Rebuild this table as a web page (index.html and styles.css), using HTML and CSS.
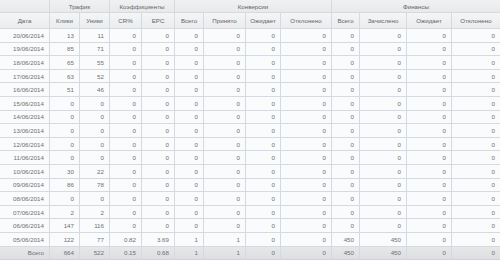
FILE: index.html
```html
<!DOCTYPE html>
<html lang="ru">
<head>
<meta charset="utf-8">
<title>Статистика</title>
<link rel="stylesheet" href="styles.css">
</head>
<body>
<div class="stats">
  <div class="row head1">
    <div class="c"></div>
    <div class="c span2">Трафик</div>
    <div class="c span2">Коэффициенты</div>
    <div class="c span4">Конверсии</div>
    <div class="c span4">Финансы</div>
  </div>
  <div class="row head2">
    <div class="c">Дата</div>
    <div class="c">Клики</div>
    <div class="c">Уники</div>
    <div class="c">CR%</div>
    <div class="c">EPC</div>
    <div class="c">Всего</div>
    <div class="c">Принято</div>
    <div class="c">Ожидает</div>
    <div class="c">Отклонено</div>
    <div class="c">Всего</div>
    <div class="c">Зачислено</div>
    <div class="c">Ожидает</div>
    <div class="c">Отклонено</div>
  </div>
  <div class="row data"><div class="c">20/06/2014</div><div class="c">13</div><div class="c">11</div><div class="c">0</div><div class="c">0</div><div class="c">0</div><div class="c">0</div><div class="c">0</div><div class="c">0</div><div class="c">0</div><div class="c">0</div><div class="c">0</div><div class="c">0</div></div>
  <div class="row data"><div class="c">19/06/2014</div><div class="c">85</div><div class="c">71</div><div class="c">0</div><div class="c">0</div><div class="c">0</div><div class="c">0</div><div class="c">0</div><div class="c">0</div><div class="c">0</div><div class="c">0</div><div class="c">0</div><div class="c">0</div></div>
  <div class="row data"><div class="c">18/06/2014</div><div class="c">65</div><div class="c">55</div><div class="c">0</div><div class="c">0</div><div class="c">0</div><div class="c">0</div><div class="c">0</div><div class="c">0</div><div class="c">0</div><div class="c">0</div><div class="c">0</div><div class="c">0</div></div>
  <div class="row data"><div class="c">17/06/2014</div><div class="c">63</div><div class="c">52</div><div class="c">0</div><div class="c">0</div><div class="c">0</div><div class="c">0</div><div class="c">0</div><div class="c">0</div><div class="c">0</div><div class="c">0</div><div class="c">0</div><div class="c">0</div></div>
  <div class="row data"><div class="c">16/06/2014</div><div class="c">51</div><div class="c">46</div><div class="c">0</div><div class="c">0</div><div class="c">0</div><div class="c">0</div><div class="c">0</div><div class="c">0</div><div class="c">0</div><div class="c">0</div><div class="c">0</div><div class="c">0</div></div>
  <div class="row data"><div class="c">15/06/2014</div><div class="c">0</div><div class="c">0</div><div class="c">0</div><div class="c">0</div><div class="c">0</div><div class="c">0</div><div class="c">0</div><div class="c">0</div><div class="c">0</div><div class="c">0</div><div class="c">0</div><div class="c">0</div></div>
  <div class="row data"><div class="c">14/06/2014</div><div class="c">0</div><div class="c">0</div><div class="c">0</div><div class="c">0</div><div class="c">0</div><div class="c">0</div><div class="c">0</div><div class="c">0</div><div class="c">0</div><div class="c">0</div><div class="c">0</div><div class="c">0</div></div>
  <div class="row data"><div class="c">13/06/2014</div><div class="c">0</div><div class="c">0</div><div class="c">0</div><div class="c">0</div><div class="c">0</div><div class="c">0</div><div class="c">0</div><div class="c">0</div><div class="c">0</div><div class="c">0</div><div class="c">0</div><div class="c">0</div></div>
  <div class="row data"><div class="c">12/06/2014</div><div class="c">0</div><div class="c">0</div><div class="c">0</div><div class="c">0</div><div class="c">0</div><div class="c">0</div><div class="c">0</div><div class="c">0</div><div class="c">0</div><div class="c">0</div><div class="c">0</div><div class="c">0</div></div>
  <div class="row data"><div class="c">11/06/2014</div><div class="c">0</div><div class="c">0</div><div class="c">0</div><div class="c">0</div><div class="c">0</div><div class="c">0</div><div class="c">0</div><div class="c">0</div><div class="c">0</div><div class="c">0</div><div class="c">0</div><div class="c">0</div></div>
  <div class="row data"><div class="c">10/06/2014</div><div class="c">30</div><div class="c">22</div><div class="c">0</div><div class="c">0</div><div class="c">0</div><div class="c">0</div><div class="c">0</div><div class="c">0</div><div class="c">0</div><div class="c">0</div><div class="c">0</div><div class="c">0</div></div>
  <div class="row data"><div class="c">09/06/2014</div><div class="c">86</div><div class="c">78</div><div class="c">0</div><div class="c">0</div><div class="c">0</div><div class="c">0</div><div class="c">0</div><div class="c">0</div><div class="c">0</div><div class="c">0</div><div class="c">0</div><div class="c">0</div></div>
  <div class="row data"><div class="c">08/06/2014</div><div class="c">0</div><div class="c">0</div><div class="c">0</div><div class="c">0</div><div class="c">0</div><div class="c">0</div><div class="c">0</div><div class="c">0</div><div class="c">0</div><div class="c">0</div><div class="c">0</div><div class="c">0</div></div>
  <div class="row data"><div class="c">07/06/2014</div><div class="c">2</div><div class="c">2</div><div class="c">0</div><div class="c">0</div><div class="c">0</div><div class="c">0</div><div class="c">0</div><div class="c">0</div><div class="c">0</div><div class="c">0</div><div class="c">0</div><div class="c">0</div></div>
  <div class="row data"><div class="c">06/06/2014</div><div class="c">147</div><div class="c">116</div><div class="c">0</div><div class="c">0</div><div class="c">0</div><div class="c">0</div><div class="c">0</div><div class="c">0</div><div class="c">0</div><div class="c">0</div><div class="c">0</div><div class="c">0</div></div>
  <div class="row data"><div class="c">05/06/2014</div><div class="c">122</div><div class="c">77</div><div class="c">0.82</div><div class="c">3.69</div><div class="c">1</div><div class="c">1</div><div class="c">0</div><div class="c">0</div><div class="c">450</div><div class="c">450</div><div class="c">0</div><div class="c">0</div></div>
  <div class="row total"><div class="c">Всего</div><div class="c">664</div><div class="c">522</div><div class="c">0.15</div><div class="c">0.68</div><div class="c">1</div><div class="c">1</div><div class="c">0</div><div class="c">0</div><div class="c">450</div><div class="c">450</div><div class="c">0</div><div class="c">0</div></div>
</div>
</body>
</html>
```

FILE: styles.css
```css
html, body {
  margin: 0;
  padding: 0;
  background: #ffffff;
}

.stats {
  width: 500px;
  display: grid;
  grid-template-columns: 50px 30px 30px 32px 33px 29px 42px 35px 51px 28px 47px 45px 48px;
  grid-template-rows: 13px 16px repeat(17, 13.6px) 16.5px;
  font-family: "Liberation Sans", Arial, sans-serif;
  font-size: 6.2px;
  color: #707070;
}

.row {
  display: contents;
}

.c {
  box-sizing: border-box;
  border-right: 1px solid #d6d9dd;
  border-bottom: 1px solid #d6d9dd;
  display: flex;
  align-items: center;
  justify-content: flex-end;
  padding-right: 5px;
  white-space: nowrap;
  overflow: hidden;
}

.c:last-child {
  border-right: none;
}

.span2 { grid-column: span 2; }
.span4 { grid-column: span 4; }

.head1 .c {
  background: linear-gradient(#f0f1f2, #e7e9eb);
  justify-content: center;
  padding: 0;
  color: #666;
}

.head2 .c {
  background: linear-gradient(#f4f5f6, #eaecee);
  justify-content: center;
  padding: 0;
  color: #666;
}

.data .c {
  background: #fafbfc;
}

.total .c {
  background: linear-gradient(#e5e7e9, #dddfe2);
  border-bottom: 1px solid #d0d3d6;
}
```
